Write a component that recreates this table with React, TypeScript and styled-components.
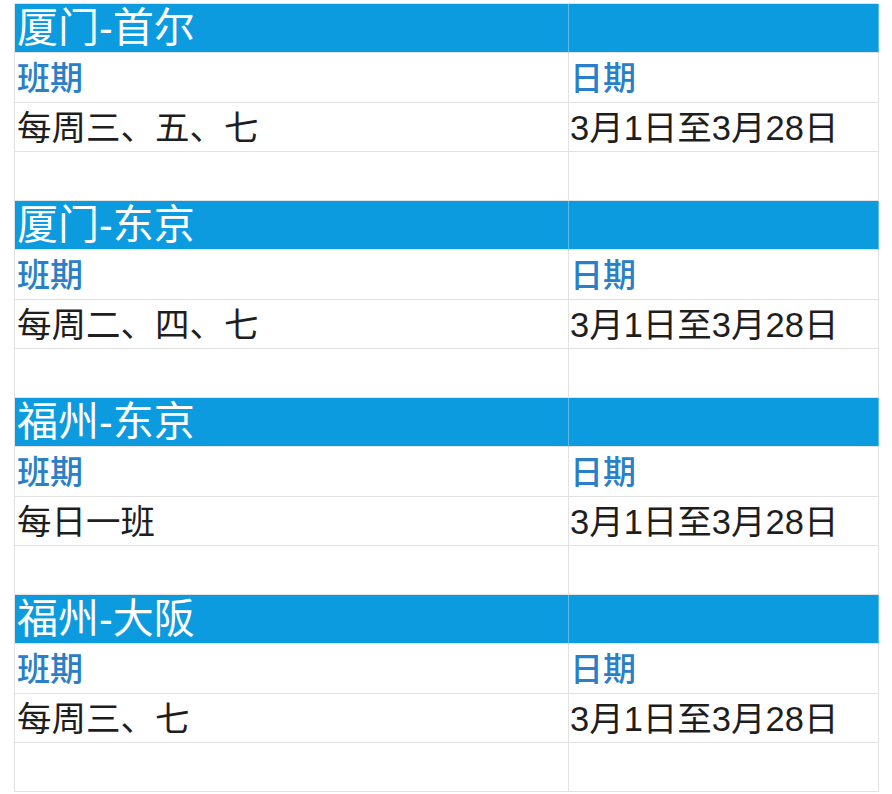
import React from "react";
import styled, {createGlobalStyle} from "styled-components";


const GlobalStyle = createGlobalStyle`
    html, body {
        margin: 0;
        padding: 0;
        background: #fff;
    }
    body {
        font-family: "Liberation Sans", "Noto Sans CJK SC", sans-serif;
    }
`;

const Page = styled.div`
    padding: 3px 0 0 14px;
`;

const Sheet = styled.div`
    display: grid;
    grid-template-columns: 554px 310px;
    grid-auto-rows: 49.25px;
    width: 864px;
    border-top: 1px solid #e2e2e2;
    border-left: 1px solid #e2e2e2;
    box-sizing: border-box;
`;

type Kind = "route" | "label" | "data" | "empty";

const Cell = styled.div<{ $kind: Kind }>`
    box-sizing: border-box;
    display: flex;
    align-items: center;
    padding: ${p => p.$kind === "route" ? "1px" : "3px"} 0 0 2px;
    border-right: 1px solid ${p => p.$kind === "route" ? "#5bbcea" : "#e2e2e2"};
    border-bottom: 1px solid #e2e2e2;
    background: ${p => p.$kind === "route" ? "#0d9be0" : "#fff"};
    color: ${p => p.$kind === "route" ? "#fff" : p.$kind === "label" ? "#2a80c8" : "#1e1e1e"};
    font-size: ${p => p.$kind === "route" ? "41px" : p.$kind === "label" ? "33px" : "34.5px"};
    font-weight: ${p => p.$kind === "label" ? 500 : 400};
    white-space: nowrap;
    overflow: hidden;
    line-height: 1;

    &:nth-child(2n) {
        padding-left: 1px;
    }
`;


interface IRoute {
    route: string
    days: string
    dates: string
}

const ROUTES: IRoute[] = [
    {route: "厦门-首尔", days: "每周三、五、七", dates: "3月1日至3月28日"},
    {route: "厦门-东京", days: "每周二、四、七", dates: "3月1日至3月28日"},
    {route: "福州-东京", days: "每日一班", dates: "3月1日至3月28日"},
    {route: "福州-大阪", days: "每周三、七", dates: "3月1日至3月28日"},
];


export default function App() {
    const renderRoutes = ROUTES.map((item, index) => (
        <React.Fragment key={index}>
            <Cell $kind="route">{item.route}</Cell>
            <Cell $kind="route"/>
            <Cell $kind="label">班期</Cell>
            <Cell $kind="label">日期</Cell>
            <Cell $kind="data">{item.days}</Cell>
            <Cell $kind="data">{item.dates}</Cell>
            <Cell $kind="empty"/>
            <Cell $kind="empty"/>
        </React.Fragment>
    ));

    return (
        <Page>
            <GlobalStyle/>
            <Sheet>
                {renderRoutes}
            </Sheet>
        </Page>
    )
}
